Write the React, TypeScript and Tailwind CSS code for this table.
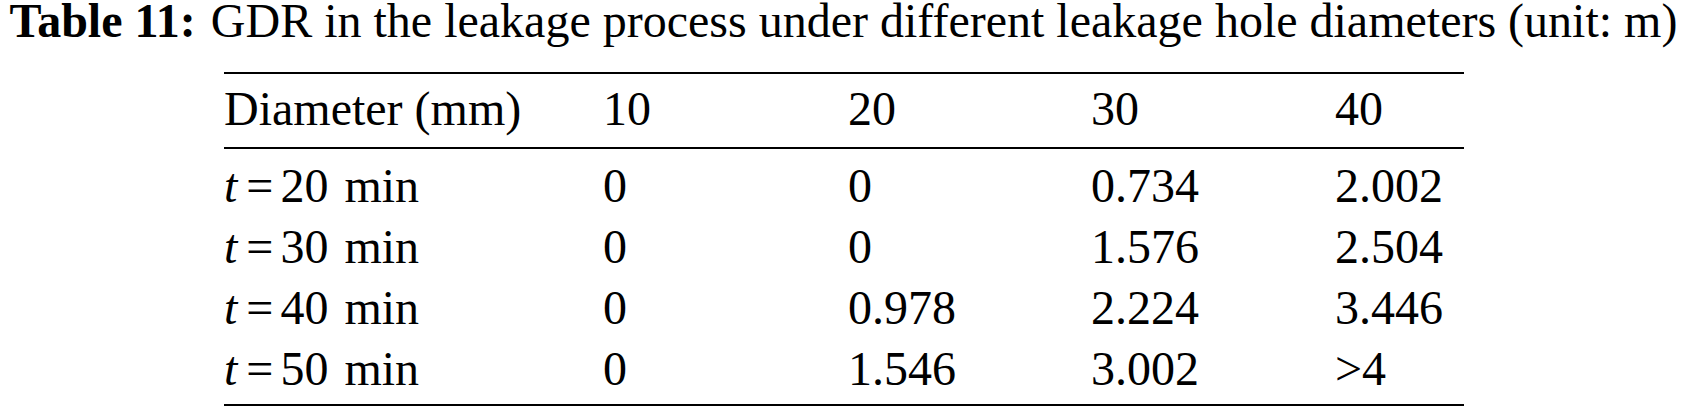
const header = ["Diameter (mm)", "10", "20", "30", "40"];

const rows = [
  { t: "20", vals: ["0", "0", "0.734", "2.002"] },
  { t: "30", vals: ["0", "0", "1.576", "2.504"] },
  { t: "40", vals: ["0", "0.978", "2.224", "3.446"] },
  { t: "50", vals: ["0", "1.546", "3.002", ">4"] },
];

const cols = "grid grid-cols-[379px_245px_243px_244px_129px]";

const App = () => {
  return (
    <main className="w-[1687px] h-[412px] bg-white text-black overflow-hidden font-['Liberation_Serif',serif]">
      {/* Caption */}
      <div className="flex justify-center whitespace-nowrap text-[48px] leading-[42px]">
        <span className="font-bold">Table 11:</span>
        <span className="ml-[15px]">GDR in the leakage process under different leakage hole diameters (unit: m)</span>
      </div>

      {/* Table */}
      <div className="ml-[224px] mt-[30px] w-[1240px] text-[48px]">
        <div className="border-t-2 border-b-2 border-black">
          <div className={`${cols} leading-[61px] pt-[4px] pb-[8px]`}>
            {header.map((h) => (
              <div key={h}>{h}</div>
            ))}
          </div>
        </div>
        <div className="border-b-2 border-black pt-[6px] pb-[5px]">
          {rows.map((r) => (
            <div key={r.t} className={`${cols} leading-[61px]`}>
              <div>
                <i>t</i>
                <span className="ml-[9px] mr-[7px]">=</span>
                {r.t}
                <span className="ml-[16px]">min</span>
              </div>
              {r.vals.map((v, i) => (
                <div key={i}>{v}</div>
              ))}
            </div>
          ))}
        </div>
      </div>
    </main>
  );
};

export default App;
